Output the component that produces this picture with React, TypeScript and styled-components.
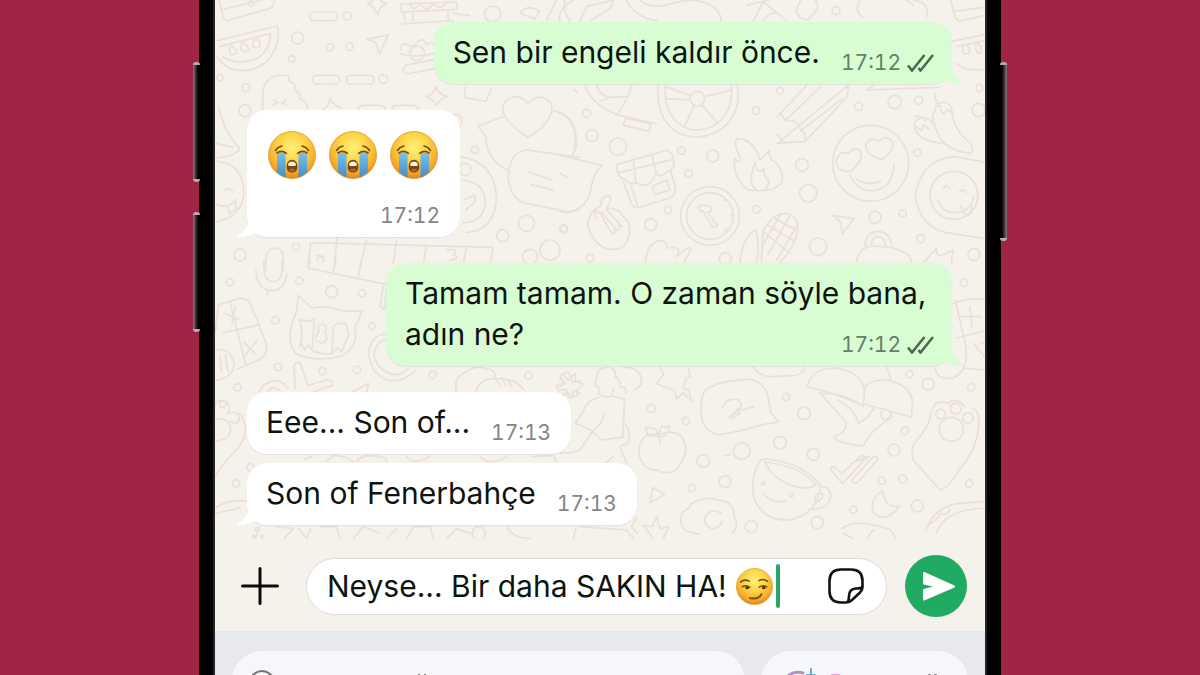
import React, { useState } from "react";
import styled, { createGlobalStyle, css } from "styled-components";

const GlobalStyle = createGlobalStyle`
  *, *::before, *::after { box-sizing: border-box; }
  body {
    margin: 0;
    background: #9f2445;
    color: #0d1410;
    font-family: Inter, "Liberation Sans", sans-serif;
  }
  button, input { font: inherit; color: inherit; }
`;

const Stage = styled.main`
  display: flex;
  justify-content: center;
  height: 100vh;
  overflow: hidden;
`;

const Phone = styled.div`
  position: relative;
  display: flex;
  flex-direction: column;
  width: 100%;
  max-width: 802px;
  border: solid #000;
  border-width: 0 14px;
  background: #f5f1eb;
`;

const SideKey = styled.span<{ $side: "left" | "right"; $top: number; $length: number }>`
  position: absolute;
  top: ${(p) => p.$top}px;
  ${(p) => p.$side}: -20px;
  width: 7px;
  height: ${(p) => p.$length}px;
  border: solid #b9a9ae;
  border-width: 3px 0;
  border-radius: 3px;
  background: linear-gradient(to ${(p) => p.$side}, #000 25%, #3a3236 60%, #8a7880);
`;

const Screen = styled.div`
  display: flex;
  flex: 1;
  flex-direction: column;
  min-height: 0;
  border: solid #26262a;
  border-width: 0 2px;
`;

const Chat = styled.section`
  position: relative;
  display: flex;
  flex: 1;
  flex-direction: column;
  justify-content: flex-end;
  gap: 26px;
  min-height: 0;
  padding: 0 33px 14px 32px;
  overflow: hidden;
`;

const Wallpaper = styled.svg`
  position: absolute;
  inset: 0;
  width: 100%;
  height: 100%;
  fill: none;
  stroke: #eae0d7;
  stroke-width: 5;
  stroke-linejoin: round;
  stroke-linecap: round;
`;

const Group = styled.div<{ $mine?: boolean }>`
  position: relative;
  display: flex;
  flex-direction: column;
  align-items: ${(p) => (p.$mine ? "flex-end" : "flex-start")};
  gap: 9px;
`;

const Bubble = styled.article<{ $mine?: boolean; $multiline?: boolean }>`
  position: relative;
  display: flow-root;
  width: ${(p) => (p.$multiline ? "100%" : "auto")};
  max-width: 566px;
  padding: 10px 18px 9px 19px;
  border-radius: 20px;
  background: ${(p) => (p.$mine ? "#d9fdd3" : "#ffffff")};
  box-shadow: 0 1px 1px rgba(60, 50, 40, 0.08);
  font-size: 30px;
  line-height: 41px;
`;

const Tail = styled.svg<{ $mine?: boolean }>`
  position: absolute;
  bottom: 0;
  width: 30px;
  height: 26px;
  ${(p) =>
    p.$mine
      ? css`
          right: -13px;
          fill: #d9fdd3;
        `
      : css`
          left: -11px;
          fill: #ffffff;
          transform: scaleX(-1);
        `}
`;

const Meta = styled.span<{ $mine?: boolean }>`
  display: flex;
  float: right;
  align-items: center;
  gap: 6px;
  margin: 19px ${(p) => (p.$mine ? 0 : 2)}px 0 21px;
  color: ${(p) => (p.$mine ? "#66806a" : "#858585")};
  font-size: 21px;
  font-variant-numeric: tabular-nums;
  line-height: 24px;
`;

const Ticks = styled.svg`
  width: 27px;
  height: 18px;
  fill: none;
  stroke: #4f6853;
  stroke-width: 2.6;
`;

const Stickers = styled.div`
  display: flex;
  gap: 13px;
  padding: 11px 4px 6px 2px;
`;

const Emoji = styled.svg<{ $size: number }>`
  flex: none;
  width: ${(p) => p.$size}px;
  height: ${(p) => p.$size}px;
`;

const Composer = styled.form`
  display: flex;
  flex: none;
  align-items: center;
  height: 92px;
  padding: 2px 18px 0 26px;
`;

const IconButton = styled.button<{ $size: number }>`
  display: grid;
  flex: none;
  place-items: center;
  width: ${(p) => p.$size}px;
  height: ${(p) => p.$size}px;
  padding: 0;
  border: 0;
  background: none;
  cursor: pointer;

  svg { width: 100%; height: 100%; }
`;

const SendButton = styled(IconButton)`
  border-radius: 50%;
  background: #21aa61;
`;

const Field = styled.label`
  display: flex;
  flex: 1;
  align-items: center;
  min-width: 0;
  height: 57px;
  margin: 0 18px 0 27px;
  padding: 0 22px 0 20px;
  border: 1px solid #dedcda;
  border-radius: 29px;
  background: #fff;
`;

const Draft = styled.input`
  field-sizing: content;
  min-width: 0;
  height: 44px;
  padding: 0;
  border: 0;
  outline: 0;
  background: none;
  font-size: 30px;
`;

const DraftTail = styled.span`
  display: flex;
  flex: 1;
  align-items: center;
  gap: 3px;
  padding-left: 9px;
`;

const Caret = styled.span`
  width: 4px;
  height: 44px;
  border-radius: 2px;
  background: #2ba56b;
`;

const Keyboard = styled.footer`
  display: flex;
  flex: none;
  gap: 16px;
  height: 44px;
  padding: 20px 17px 0;
  background: #e8e9ed;
  overflow: hidden;
`;

const KeyboardPill = styled.button<{ $grow: number }>`
  flex: ${(p) => p.$grow} 1 0;
  height: 60px;
  padding: 0;
  border: 0;
  border-radius: 30px;
  background: #f6f7fc;
  overflow: hidden;

  svg { display: block; width: 100%; height: 60px; fill: none; }
`;

type Dot = [number, number, number];

/* Each sheet is drawn on a grid three times finer than the screen. */
const sheets: { x: number; y: number; paths: string[]; dots: Dot[] }[] = [
  {
    x: 180,
    y: 0,
    paths: [
      "M118 0L130 52Q134 64 148 60L268 26Q284 20 281 4M122 30L280 -8",
      "M112 122L292 78Q305 142 256 188Q208 224 152 206Q122 192 110 168M120 140L272 100Q270 150 234 174Q180 200 128 170",
      "M150 160Q146 136 158 140Q176 156 166 162Q156 166 150 160M184 148Q182 120 194 130Q212 146 202 154Q190 158 184 148M218 136Q220 112 236 120Q246 136 236 142Q224 146 218 136",
      "M402 36H460A13 13 0 0 1 460 62H402A13 13 0 0 1 402 36M410 226H466A13 13 0 0 1 466 252H410A13 13 0 0 1 410 226M512 226H570A13 13 0 0 1 570 252H512A13 13 0 0 1 512 226",
      "M560 118L625 105L598 163L588 128Z",
      "M562 8Q582 6 584 -8M620 10Q600 16 594 44Q582 20 562 8M594 -8Q600 6 620 10",
      "M248 330V290Q248 226 308 225Q332 224 326 244Q350 248 345 270Q364 278 360 298Q384 306 382 328M280 300L294 308L280 314M318 300L306 308L318 314",
      "M430 328Q448 320 450 294Q458 318 486 324M738 290Q762 286 766 260Q776 284 802 290Q778 296 770 318Q762 296 738 290",
      "M662 12L830 6L832 28L664 36ZM672 38L676 68M700 36L698 62M802 30L806 62M664 72L820 62M690 12Q700 40 720 10Q742 44 760 8Q780 36 802 6M820 40L870 46",
      "M664 150Q656 136 676 130Q700 150 712 126Q730 110 740 134Q756 120 764 136M660 160Q690 176 764 160M676 200Q662 214 680 222L764 206M676 196L764 178",
      "M1020 40Q1040 10 1080 34L1064 56ZM1100 60L1130 0M1140 64Q1130 30 1180 0",
      "M856 262L852 292L918 304L934 266",
      "M1044 412Q968 362 968 324Q974 292 1008 290Q1036 292 1044 314Q1060 288 1088 292Q1124 304 1114 340Q1096 384 1044 412",
      "M968 350L894 378L918 410Q916 478 990 516M1120 332Q1176 342 1186 396Q1196 440 1180 460",
      "M1040 450L1200 472M1040 450Q990 456 984 528Q990 600 1040 610L1160 634Q1190 634 1200 628M1048 516L1116 540M1054 554L1120 570",
      "M116 320Q132 398 178 444Q176 466 106 474M106 430L160 442M112 484Q188 490 192 576Q188 650 108 666M136 570Q150 560 158 576M112 614Q150 628 166 598M142 618L148 640L170 626L166 602",
      "M535 330V322Q540 316 560 316H600Q616 318 616 330M636 330V322Q640 316 660 316H700Q716 318 716 330",
      "M836 470Q940 480 950 590Q946 690 860 698M846 540Q916 546 916 610Q910 668 848 668M856 598L884 586L886 604L858 630",
      "M392 728L940 742L930 790M392 728L384 800M472 712L462 800M560 720L540 800M650 720L640 790M740 735L730 790M860 740L850 790M800 750Q840 744 820 764Q846 774 808 782M412 766L432 770M412 780Q420 756 432 784",
      "M258 810V772Q262 744 286 744Q312 748 310 776V810",
    ],
    dots: [[502, 48, 12], [353, 114, 18], [450, 142, 11], [508, 140, 11], [335, 177, 10], [610, 237, 13], [198, 263, 12], [195, 332, 18], [120, 233, 9], [938, 42, 24], [885, 450, 11], [855, 508, 18], [1040, 670, 24], [968, 707, 18], [1150, 687, 11], [1050, 770, 22], [1110, 750, 30], [180, 765, 18], [348, 740, 11], [824, 364, 22], [712, 160, 22], [214, 10, 8]],
  },
  {
    x: 560,
    y: 0,
    paths: [
      "M30 62Q10 40 14 0M60 62L80 20L160 0L150 26L90 62M200 0Q220 50 290 62M240 0Q270 30 330 12Q400 -8 440 10Q480 26 484 62M560 16L640 -4M580 62L610 6L680 62M610 60Q630 30 660 44",
      "M722 0L708 34Q716 58 744 60L774 26Q774 12 766 0M900 0Q880 30 908 52M1060 0Q1110 6 1100 50M1040 0L1060 16",
      "M1172 0L1186 52Q1192 64 1206 62L1274 46M1180 34L1274 22M1176 124L1274 104M1190 140L1274 122M1190 190Q1220 216 1274 208M1210 160Q1204 132 1220 134Q1236 152 1224 162ZM1250 156Q1242 126 1256 130Q1270 146 1262 160Z",
      "M76 256Q90 310 170 344Q240 360 290 372M110 256Q120 290 150 292L204 290L216 256M150 292L120 304M204 290L174 340M196 354L272 372L268 394L190 376Z",
      "M294 256Q286 380 380 408Q450 422 504 370Q544 320 532 256M316 256Q308 358 388 388Q450 400 492 352Q520 310 514 256M390 286L316 260M392 300L316 296M402 316L374 380M424 314L472 368M434 290L514 270",
      "M652 350L740 256M864 256Q868 290 846 308L736 424L652 430ZM652 350Q664 332 676 362Q716 356 722 392Q740 396 736 424M676 362L780 262M722 392L848 296M652 404L674 428",
      "M920 270L1140 262M920 270L940 256M42 270L52 276",
      "M1064 350Q1090 346 1096 364M1124 280Q1126 312 1144 322M1124 334Q1128 306 1152 306Q1176 312 1176 336Q1180 390 1232 430Q1244 456 1230 460Q1150 450 1132 396Q1110 350 1124 334M1140 330L1152 342L1162 328L1176 338M1064 384Q1060 360 1084 354Q1108 352 1116 370M1064 384Q1076 424 1150 430M1068 380L1084 392L1092 374L1106 388",
      "M872 514Q826 518 830 478Q838 450 866 460Q878 442 898 450Q918 476 872 514M966 478Q916 468 918 432Q932 410 958 424Q974 402 996 422Q1008 450 966 478M872 528Q890 574 940 572Q1000 564 1002 492M888 536Q920 560 960 544",
      "M170 494L322 450Q340 462 342 486Q344 508 320 516Q306 534 288 522Q270 570 228 548Q206 556 196 538Q170 534 170 494M220 482L228 548M276 466L290 524M176 518L340 478M190 546L216 614Q222 626 238 622L330 594Q350 584 346 560L332 514M212 556L234 620M276 560L320 540L330 570L284 584Z",
      "M562 570Q516 530 524 474Q540 500 540 470Q520 430 530 416Q580 416 600 480Q620 460 628 452Q624 476 646 486Q676 520 664 548Q640 580 562 570M590 570Q560 550 586 486Q590 528 612 506Q610 530 626 540Q628 560 610 572",
      "M84 680Q84 634 120 620Q124 586 148 588Q158 596 140 626Q176 622 188 648L204 664Q220 720 180 746Q110 760 84 680M110 656Q96 620 120 640L156 700Q170 706 162 680M124 636L170 690Q184 694 176 666M140 630L186 680",
      "M414 622Q420 610 450 620L456 634L442 636L472 674Q470 682 458 682L430 634Q420 636 414 622",
      "M540 786Q550 704 588 690Q600 750 590 786M604 786L610 690Q640 640 676 640Q718 650 714 690Q700 750 660 786M610 694L690 760M624 676L704 724M646 656L714 692M606 740L662 642M624 764L690 646M650 780L714 672M256 786Q262 724 304 722Q316 720 324 744Q370 736 350 770Q396 730 392 750L372 786",
      "M818 646L882 656L848 700L840 664Z",
      "M1274 486L1180 470Q1080 480 1066 590Q1080 680 1160 698L1274 716M1150 566Q1160 550 1170 566M1198 576Q1210 562 1220 578M1134 600Q1150 650 1210 634Q1238 620 1240 590M1204 620Q1206 646 1228 644Q1240 630 1232 612",
      "M916 738Q914 700 950 694Q990 694 996 738M934 736Q934 712 954 710Q976 712 976 740M890 786Q896 740 940 738Q1020 740 1050 770L1054 786M1092 786L1130 744Q1124 764 1142 768L1180 750Q1174 776 1176 786",
      "M0 340Q50 360 46 430Q44 460 36 468M0 466L126 496Q100 520 94 560Q84 630 20 638L0 634M0 520L24 534",
    ],
    dots: [[412, 296, 22], [80, 340, 12], [96, 406, 18], [174, 440, 26], [364, 452, 11], [458, 468, 18], [386, 521, 11], [588, 332, 11], [660, 272, 10], [896, 319, 12], [1004, 306, 20], [1076, 301, 12], [828, 32, 12], [726, 495, 19], [745, 580, 26], [590, 628, 11], [774, 740, 26], [945, 652, 18], [1028, 640, 11], [1082, 716, 12], [1072, 458, 11], [932, 490, 114], [450, 648, 88], [450, 648, 70], [324, 630, 11], [272, 674, 18], [12, 686, 11], [90, 774, 11], [496, 776, 18], [1242, 764, 18], [1182, 586, 72], [1256, 330, 20], [1258, 264, 10], [456, 580, 2], [496, 600, 2], [514, 644, 2], [498, 690, 2]],
  },
  {
    x: 180,
    y: 260,
    paths: [
      "M252 0V30Q254 64 280 66Q306 62 306 30V0M228 30Q230 92 278 92Q316 88 320 40M264 92L262 108",
      "M384 24L620 74M392 0L384 24M468 0L460 36M544 0L534 56M620 74L614 150L600 138L610 80",
      "M116 134L176 116Q200 112 212 132L258 250Q266 282 240 298L172 328M130 218L240 194M150 128L196 310M136 160L176 180M166 140L156 190M190 244L224 280M232 240L196 286M108 270Q150 262 162 310Q164 350 108 362M120 290L124 330M136 284L144 334M106 216L116 134",
      "M350 154L354 106L396 144Q440 134 484 152L546 154Q536 180 524 204Q538 260 484 288Q420 308 352 284Q310 246 350 154M358 178L384 184L402 176L402 196L396 270L384 252L376 270L364 252L360 260Q372 210 358 178M498 190L474 190L460 200L456 280L474 262L484 278L506 226ZM400 274Q430 286 456 280M418 214Q404 196 428 192Q448 202 434 218Q450 240 424 250Q396 240 418 214",
      "M620 222Q570 224 566 282Q574 348 630 362Q680 364 706 330M620 236Q584 246 582 290Q594 330 640 344Q670 344 684 326",
      "M346 386L342 320Q344 304 360 308L384 376L440 360Q464 362 458 376L400 396M238 396Q250 366 284 362Q310 362 324 386M262 396Q276 376 300 390M518 396L566 370L560 396",
      "M830 396Q816 352 862 334Q880 320 900 322L934 330Q950 340 944 356M886 396Q900 352 948 356Q1010 354 1032 390M948 356L958 376M966 354L978 376M984 358L994 380",
      "M1150 340L1164 362L1186 340L1186 366L1202 362M1150 340L1140 350L1152 370L1130 376L1134 392L1158 388L1164 410L1176 414L1182 392L1200 400",
      "M104 478Q150 470 152 510Q148 540 104 544M104 440Q110 412 140 426Q156 440 142 460Q180 450 178 480Q170 494 154 486M180 462Q220 520 160 580Q120 620 106 648",
      "M108 742Q150 716 200 724M106 760L180 744M240 800L226 836M290 800L340 806L312 836M356 806L380 836L392 806M420 800L470 800L480 836M520 836L550 800L600 820M620 836L650 806M680 836L700 800L750 800L760 836M800 836L830 806L870 820M980 800Q1000 836 1050 836",
      "M372 600L396 588M440 604L460 586L500 592L520 606M530 604Q550 580 600 590Q620 592 620 606M680 588Q700 620 750 588M900 590Q930 620 980 590M1060 590L1120 586L1130 606",
    ],
    dots: [[150, 67, 11], [358, 62, 11], [455, 95, 18], [546, 100, 11], [286, 181, 11], [577, 199, 10], [294, 321, 11], [427, 333, 11], [531, 329, 11], [758, 344, 11], [172, 382, 11], [1045, 347, 11], [128, 432, 10], [212, 622, 11], [168, 670, 11], [896, 820, 20], [230, 808, 5], [222, 830, 4], [246, 830, 4]],
  },
  {
    x: 560,
    y: 260,
    paths: [
      "M0 350L14 370L0 380M14 340Q24 330 30 346L38 366Q66 364 68 376L50 390Q60 408 40 410L22 396L6 408",
      "M110 350Q110 324 140 322M110 350L104 376L116 382L116 400Q130 416 156 408L160 388M150 322Q170 330 166 350Q184 360 180 380Q200 380 198 400M190 322Q226 320 240 344Q256 376 222 390M116 412Q80 420 68 456L46 490L92 510L124 540L188 532L194 418L156 408M132 460Q130 490 100 510L60 570Q40 580 0 580M194 490Q216 520 204 552L186 556M180 560L200 610M160 590L136 610",
      "M300 322L312 344Q290 366 292 372L344 392L350 418L370 398L396 426L386 390L370 384Q374 350 390 352L386 324",
      "M438 388Q480 362 560 358Q600 356 622 400L632 456L656 486L600 496Q540 516 478 524Q440 520 426 478Q416 420 438 388M486 444Q500 410 536 420Q560 440 508 470Q510 480 540 460Q520 440 550 450L582 440",
      "M580 322Q600 352 640 350L710 346Q730 340 734 322",
      "M742 380Q754 326 822 324Q900 330 914 390L910 438Q830 400 742 380M914 380Q940 354 990 362Q1056 380 1058 430L1054 472Q980 450 914 432M980 322Q990 340 992 360M780 398L858 486Q864 516 822 530Q830 550 910 558Q930 510 1000 470M790 400Q860 400 910 440M830 420Q880 440 896 490Q930 470 944 442M964 454Q960 480 980 480Q1000 460 990 456",
      "M250 534Q230 560 240 594Q256 634 290 630Q306 638 320 638Q350 640 372 592Q386 550 360 526Q330 508 300 524Q270 516 250 534M256 502L264 526L300 530L286 506L256 502M300 550Q296 520 304 500L328 500Q330 520 306 532",
      "M494 588L514 582",
      "M600 602Q612 594 640 600Q720 610 776 668Q784 676 780 690Q770 760 690 780Q610 784 582 716Q570 650 600 602M614 606Q640 660 700 678Q740 690 768 676Q730 620 614 606M610 700Q640 736 680 722M778 680Q816 680 812 712Q800 752 748 748M766 720Q760 700 786 700Q798 710 766 730Z",
      "M816 632Q806 622 822 620L846 640L900 590Q918 582 916 596L852 666Q844 672 838 660ZM876 660L940 590Q954 586 952 600L894 666Q880 676 876 660M874 610L928 590",
      "M1126 432L1112 460Q1110 500 1070 540Q1050 560 1060 600L1140 690Q1160 690 1200 626Q1250 570 1256 500Q1260 450 1236 444M1126 432Q1140 420 1164 430Q1190 410 1214 440",
      "M968 692Q924 720 942 760Q980 792 1018 738Q976 748 968 692",
      "M270 728L278 682L314 704ZM230 770L214 800L232 820",
      "M380 814Q352 790 368 758Q386 746 396 730Q440 706 480 722Q526 726 522 770Q540 800 516 820M484 760Q456 742 436 770Q430 804 462 806Q484 800 486 784M380 814L420 824",
      "M48 806L40 836M60 800L200 810L220 836M280 836L250 796L276 800L290 770L300 806L326 800L310 836",
      "M846 806Q880 780 940 796Q1000 800 1006 836M920 836L940 810M850 820L880 836M1098 812Q1120 740 1200 730L1274 724M1130 820Q1150 750 1274 744M1110 790Q1136 780 1140 760Q1160 766 1170 750",
      "M1186 120L1216 250Q1230 330 1180 354Q1130 360 1126 326M1180 130Q1240 110 1274 120M1200 170L1262 170M1230 140L1236 200M1190 234L1270 214M1240 250L1274 290M1262 250L1274 246M1210 324L1274 330",
    ],
    dots: [[274, 446, 12], [378, 483, 11], [678, 411, 11], [732, 460, 19], [545, 573, 25], [660, 548, 19], [760, 583, 18], [430, 603, 19], [495, 665, 18], [395, 685, 11], [1048, 343, 11], [1105, 373, 18], [1035, 512, 11], [1234, 382, 11], [1174, 508, 36], [1142, 462, 15], [1187, 446, 16], [1224, 474, 16], [1002, 570, 18], [965, 662, 11], [1028, 657, 12], [1072, 738, 18], [880, 749, 11], [574, 800, 18], [772, 788, 18], [1228, 670, 11], [1212, 68, 11], [610, 670, 5], [694, 706, 5]],
  },
];

function ChatWallpaper() {
  return (
    <Wallpaper viewBox="215 0 770 539" preserveAspectRatio="xMidYMax slice" aria-hidden="true">
      {sheets.map((s) => (
        <g key={`${s.x}-${s.y}`} transform={`translate(${s.x} ${s.y}) scale(0.3333)`}>
          {s.paths.map((d) => (
            <path key={d} d={d} />
          ))}
          {s.dots.map(([cx, cy, r]) => (
            <circle key={`${cx}-${cy}-${r}`} cx={cx} cy={cy} r={r} />
          ))}
        </g>
      ))}
    </Wallpaper>
  );
}

const Definitions = styled.svg`
  position: absolute;
`;

function EmojiGradients() {
  return (
    <Definitions width="0" height="0" aria-hidden="true">
      <defs>
        <radialGradient id="face" cx="0.5" cy="0.34" r="0.66">
          <stop offset="0" stopColor="#fff07a" />
          <stop offset="0.45" stopColor="#fdd544" />
          <stop offset="0.8" stopColor="#f6a92a" />
          <stop offset="1" stopColor="#e2831c" />
        </radialGradient>
        <linearGradient id="tear" x1="0" y1="0" x2="0" y2="1">
          <stop offset="0" stopColor="#7fc0e4" />
          <stop offset="1" stopColor="#3d8fcd" />
        </linearGradient>
      </defs>
    </Definitions>
  );
}

function CryingFace() {
  return (
    <Emoji $size={48} viewBox="0 0 48 48" role="img" aria-label="😭">
      <circle cx="24" cy="24" r="23.5" fill="url(#face)" stroke="#dd9a2c" strokeWidth="0.8" />
      <path d="M9 22.500Q13 20.500 17.500 22.500V46.500Q12.500 44.500 9 41Z" fill="url(#tear)" />
      <path d="M39 22.500Q35 20.500 30.500 22.500V46.500Q35.500 44.500 39 41Z" fill="url(#tear)" />
      <g fill="none" stroke="#7b4a12" strokeWidth="1.600" strokeLinecap="round">
        <path d="M9 22Q13.500 18.500 18.500 22.300" />
        <path d="M39 22Q34.500 18.500 29.500 22.300" />
        <path d="M7.500 19.500Q9.500 16 14 15" />
        <path d="M40.500 19.500Q38.500 16 34 15" />
      </g>
      <path d="M24 28.800C27.500 28.800 29.300 32 29.300 35.500S28 41.500 24 41.500S18.700 39 18.700 35.500S20.500 28.800 24 28.800Z" fill="#7a4513" />
      <path d="M20.500 32Q24 28.800 27.500 32L28 34.500Q24 35.500 20 34.500Z" fill="#fff6e4" />
      <path d="M20.500 39Q24 36 27.500 39Q24 42 20.500 39Z" fill="#a96a2c" />
    </Emoji>
  );
}

function SmirkingFace() {
  return (
    <Emoji $size={37} viewBox="0 0 48 48" role="img" aria-label="😏">
      <circle cx="24" cy="24" r="23.5" fill="url(#face)" stroke="#dd9a2c" strokeWidth="0.8" />
      <g fill="none" stroke="#7b4d14" strokeWidth="2" strokeLinecap="round">
        <path d="M6 18Q11 14 17 17" />
        <path d="M30 16.500Q35 13 41 17.500" />
        <path d="M8 24.500Q13 21.500 18 25" />
        <path d="M30 25Q34 21.500 40 24.500" />
        <path d="M18 39Q29 41.500 33 34" strokeWidth="2.400" />
      </g>
      <ellipse cx="14.500" cy="25.500" rx="2.500" ry="2.200" fill="#5a3408" />
      <ellipse cx="36" cy="25.500" rx="2.500" ry="2.200" fill="#5a3408" />
    </Emoji>
  );
}

function BubbleTail({ mine }: { mine?: boolean }) {
  return (
    <Tail $mine={mine} viewBox="0 0 30 26" aria-hidden="true">
      <path d="M6 0H17V7C17 16 23 22 30 25.500C24 26.500 17 26 12 22L0 25Z" />
    </Tail>
  );
}

function Stamp({ time, mine }: { time: string; mine?: boolean }) {
  return (
    <Meta $mine={mine}>
      <time>{time}</time>
      {mine && (
        <Ticks viewBox="0 0 27 18" role="img" aria-label="İletildi">
          <path d="M1 11.500L5 16.500L17.500 1" />
          <path d="M11.500 14L13.500 16.500L26 1" />
        </Ticks>
      )}
    </Meta>
  );
}

export default function App() {
  const [draft, setDraft] = useState("Neyse... Bir daha SAKIN HA!");

  return (
    <>
      <GlobalStyle />
      <EmojiGradients />
      <Stage>
        <Phone>
          <SideKey $side="left" $top={62} $length={120} />
          <SideKey $side="left" $top={212} $length={120} />
          <SideKey $side="right" $top={62} $length={179} />
          <Screen>
            <Chat aria-label="Sohbet">
              <ChatWallpaper />
              <Group $mine>
                <Bubble $mine>
                  Sen bir engeli kaldır önce.
                  <Stamp time="17:12" mine />
                  <BubbleTail mine />
                </Bubble>
              </Group>
              <Group>
                <Bubble>
                  <Stickers>
                    <CryingFace />
                    <CryingFace />
                    <CryingFace />
                  </Stickers>
                  <Stamp time="17:12" />
                  <BubbleTail />
                </Bubble>
              </Group>
              <Group $mine>
                <Bubble $mine $multiline>
                  Tamam tamam. O zaman söyle bana, <br />
                  adın ne?
                  <Stamp time="17:12" mine />
                  <BubbleTail mine />
                </Bubble>
              </Group>
              <Group>
                <Bubble>
                  Eee... Son of...
                  <Stamp time="17:13" />
                </Bubble>
                <Bubble>
                  Son of Fenerbahçe
                  <Stamp time="17:13" />
                  <BubbleTail />
                </Bubble>
              </Group>
            </Chat>
            <Composer onSubmit={(e) => e.preventDefault()}>
              <IconButton type="button" $size={38} aria-label="Ekle">
                <svg viewBox="0 0 38 38" stroke="#0b0b0b" strokeWidth="3" strokeLinecap="round">
                  <path d="M19 1.500V36.500M1.500 19H36.500" />
                </svg>
              </IconButton>
              <Field>
                <Draft
                  aria-label="Mesaj"
                  value={draft}
                  onChange={(e) => setDraft(e.target.value)}
                />
                <DraftTail>
                  <SmirkingFace />
                  <Caret />
                </DraftTail>
                <IconButton type="button" $size={36} aria-label="Çıkartmalar">
                  <svg viewBox="0 0 36 36" fill="none" stroke="#111" strokeWidth="2.600" strokeLinejoin="round">
                    <path d="M13 1.500H23Q34.500 1.500 34.500 13V19Q34.500 22 32 24.500L24 32Q21.500 34.500 18 34.500H13Q1.500 34.500 1.500 23V13Q1.500 1.500 13 1.500Z" />
                    <path d="M19.500 34.500Q21 32.500 21 28Q21 21 28 20.500Q33 20.500 34.500 19" />
                  </svg>
                </IconButton>
              </Field>
              <SendButton type="submit" $size={62} aria-label="Gönder">
                <svg viewBox="0 0 62 62" fill="#fff" stroke="#fff" strokeWidth="2" strokeLinejoin="round">
                  <path d="M19 18L49 31.500L19 44.500V35L32 31.500L19 28.500Z" />
                </svg>
              </SendButton>
            </Composer>
            <Keyboard>
              <KeyboardPill type="button" $grow={513} aria-label="Ara">
                <svg viewBox="0 0 513 60" preserveAspectRatio="xMinYMin slice">
                  <circle cx="30" cy="32" r="12" stroke="#77787d" strokeWidth="2" />
                  <path d="M186 24h2M192 24h2" stroke="#77787d" strokeWidth="2" />
                </svg>
              </KeyboardPill>
              <KeyboardPill type="button" $grow={207} aria-label="Oluştur">
                <svg viewBox="0 0 207 60" preserveAspectRatio="xMinYMin slice" strokeWidth="3" strokeLinecap="round">
                  <path d="M28 24Q34 20 42 22" stroke="#b48fc9" />
                  <path d="M50 18V30M46 24H54" stroke="#6fa5d4" strokeWidth="2" />
                  <path d="M71 24.500H78" stroke="#ee9fe4" />
                  <path d="M168 24h1M174 24h1" stroke="#85868a" strokeWidth="2" />
                </svg>
              </KeyboardPill>
            </Keyboard>
          </Screen>
        </Phone>
      </Stage>
    </>
  );
}
